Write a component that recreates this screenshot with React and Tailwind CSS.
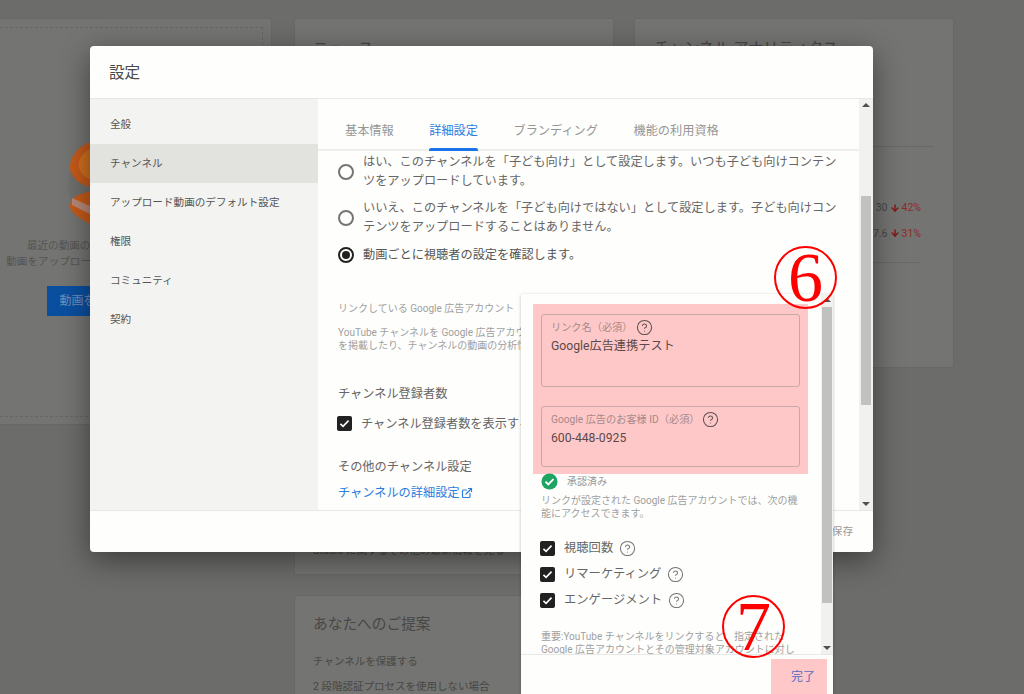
import { ArrowDown, CircleHelp, ExternalLink } from "lucide-react";

const font = "font-['Roboto','Noto_Sans_CJK_JP',sans-serif]";

function Checkbox({ className }) {
  return (
    <span className={`flex h-[15px] w-[15px] shrink-0 items-center justify-center rounded-[2px] bg-[#212121] ${className || ""}`}>
      <svg viewBox="0 0 16 16" className="h-[13px] w-[13px]" fill="none" stroke="#fff" strokeWidth="2">
        <path d="M3 8.5l3.2 3L13 4.5" />
      </svg>
    </span>
  );
}

function Radio({ on }) {
  return (
    <span className={`flex h-4 w-4 shrink-0 items-center justify-center rounded-full border-2 ${on ? "border-[#212121]" : "border-[#757575]"}`}>
      {on && <span className="h-2 w-2 rounded-full bg-[#212121]" />}
    </span>
  );
}

function Scrollbar({ thumbTop, thumbHeight, className }) {
  return (
    <div className={`flex flex-col items-center bg-[#f1f1ef] ${className}`}>
      <div className="mt-[4px] h-0 w-0 border-x-[4px] border-b-[4px] border-x-transparent border-b-[#505050]" />
      <div className={`w-[10px] bg-[#c1c1bf] ${thumbTop} ${thumbHeight}`} />
      <div className="mt-auto mb-[4px] h-0 w-0 border-x-[4px] border-t-[4px] border-x-transparent border-t-[#505050]" />
    </div>
  );
}

function BackgroundPage() {
  return (
    <div className="flex h-full items-start gap-[20px] bg-[#6c6c6a] pt-[18px] text-[#474745]">
      <div className="mr-[2px] h-[407px] w-[272px] rounded-r-[3px] border border-l-0 border-[#686866] bg-[#747472] pr-[8px] pt-[8px]">
        <div className="flex h-[390px] flex-col items-center border border-l-0 border-dashed border-[#666664] pt-[113px]">
          <svg viewBox="0 0 40 84" className="ml-[-86px] h-[84px] w-[40px]">
            <circle cx="36" cy="44" r="36" fill="#6f6f6d" />
            <path d="M24 0C8 6 1 18 2 28c2 10 11 16 22 19z" fill="#c65a1a" />
            <path d="M22 8C14 12 9 20 11 27c2 6 6 9 11 11z" fill="#d0701f" />
            <path d="M24 50C14 52 1 56 2 66c1 6 10 12 22 18z" fill="#c65a1a" />
            <path d="M4 64l20 10v-8L4 57z" fill="#b98a78" />
          </svg>
          <p className="ml-[3px] mt-[13px] whitespace-nowrap text-[10.6px] leading-[16px] text-[#555553]">最近の動画の指標を確認してみたいですか？</p>
          <p className="ml-[3px] whitespace-nowrap text-[10.6px] leading-[16px] text-[#555553]">動画をアップロードして公開すると、確認できます。</p>
          <div className="ml-[1px] mt-[16px] flex h-[30px] w-[170px] items-center bg-[#0a4f9f] pl-[13px] text-[12px] text-[#6d8fbb]">動画をアップロード</div>
        </div>
      </div>

      <div className="flex w-[320px] flex-col gap-[20px]">
        <div className="flex h-[557px] flex-col rounded-[3px] border border-[#686866] bg-[#747472] px-[18px] pt-[18px]">
          <div className="flex items-center justify-between pr-[10px]">
            <span className="text-[15.3px]">ニュース</span>
            <span className="text-[14px]">‹ &nbsp; ›</span>
          </div>
          <p className="mt-auto mb-[15px] text-[10.6px]">Studio に関するその他の最新情報を見る</p>
        </div>
        <div className="h-[200px] rounded-[3px] border border-[#686866] bg-[#747472] px-[18px] pt-[18px]">
          <p className="text-[14.7px] leading-[20px]">あなたへのご提案</p>
          <p className="mt-[20px] text-[10.5px] leading-[16px]">チャンネルを保護する</p>
          <p className="mt-[9px] text-[10.5px] leading-[16px]">2 段階認証プロセスを使用しない場合</p>
        </div>
      </div>

      <div className="h-[350px] w-[320px] rounded-[3px] border border-[#686866] bg-[#747472] px-[19px] pt-[18px]">
        <p className="text-[15.2px]">チャンネル アナリティクス</p>
        <div className="mt-[86px] border-t border-[#686866] pt-[53px] pr-[13px]">
          <div className="flex items-center justify-end gap-[2px] text-[10.5px]">
            30 <ArrowDown size={10} strokeWidth={3.5} className="text-[#7d1a16]" /> <span className="text-[#8f2a26]">42%</span>
          </div>
          <div className="mt-[10px] flex items-center justify-end gap-[2px] text-[10.5px]">
            7.6 <ArrowDown size={10} strokeWidth={3.5} className="text-[#7d1a16]" /> <span className="text-[#8f2a26]">31%</span>
          </div>
          <div className="mt-[21px] border-t border-[#686866]" />
        </div>
      </div>
    </div>
  );
}

function SettingsDialog() {
  const side = ["全般", "チャンネル", "アップロード動画のデフォルト設定", "権限", "コミュニティ", "契約"];
  const tabs = ["基本情報", "詳細設定", "ブランディング", "機能の利用資格"];
  return (
    <div className="absolute left-[90px] top-[46px] flex h-[506px] w-[783px] flex-col overflow-hidden rounded-[4px] bg-[#fefefc] shadow-[0_8px_30px_rgba(0,0,0,0.45)]">
      <div className="flex h-[53px] shrink-0 items-center border-b border-[#e8e8e6] pl-[19px] pt-[3px] text-[15.6px] text-[#4a4a4a]">設定</div>
      <div className="flex min-h-0 flex-1">
        <div className="w-[228px] shrink-0 bg-[#f3f4f1] pt-[6px]">
          {side.map((s, i) => (
            <div key={s} className={`flex h-[39px] items-center pl-[20px] text-[10.6px] text-[#555] ${i === 1 ? "bg-[#e2e2df]" : ""}`}>{s}</div>
          ))}
        </div>
        <div className="flex min-w-0 flex-1 flex-col">
          <div className="flex h-[52px] shrink-0 items-stretch gap-[35.5px] border-b-2 border-[#eeeeec] pl-[27px] text-[12.2px]">
            {tabs.map((t, i) => (
              <div key={t} className={`relative flex items-center pt-[15px] ${i === 1 ? "text-[#2a7de1]" : "text-[#969696]"}`}>
                {t}
                {i === 1 && <span className="absolute inset-x-0 bottom-[-2px] h-[3px] rounded-t-[2px] bg-[#1a73e8]" />}
              </div>
            ))}
          </div>
          <div className="min-h-0 flex-1 overflow-hidden pl-[20px] pr-[20px] text-[12.2px] leading-[18.5px] text-[#666]">
            <div className="mt-[2px] flex items-center gap-[9px]">
              <Radio />
              <p>はい、このチャンネルを「子ども向け」として設定します。いつも子ども向けコンテンツをアップロードしています。</p>
            </div>
            <div className="mt-[9px] flex items-center gap-[9px]">
              <Radio />
              <p>いいえ、このチャンネルを「子ども向けではない」として設定します。子ども向けコンテンツをアップロードすることはありません。</p>
            </div>
            <div className="mt-[10px] flex items-center gap-[9px]">
              <Radio on />
              <p className="text-[#555]">動画ごとに視聴者の設定を確認します。</p>
            </div>
            <p className="mt-[35px] text-[10px] leading-[18px] whitespace-nowrap text-[#a0a0a0]">リンクしている Google 広告アカウント</p>
            <p className="mt-[8px] whitespace-nowrap text-[10px] leading-[13px] text-[#a0a0a0]">
              YouTube チャンネルを Google 広告アカウントにリンクすると、動画に広告
              <br />
              を掲載したり、チャンネルの動画の分析情報を確認したりできます。
            </p>
            <p className="mt-[33px] text-[12.2px] leading-[18px]">チャンネル登録者数</p>
            <div className="-ml-[1px] mt-[12px] flex items-center gap-[9px]">
              <Checkbox />
              <span className="whitespace-nowrap">チャンネル登録者数を表示する</span>
            </div>
            <p className="mt-[25px] leading-[18px]">その他のチャンネル設定</p>
            <div className="mt-[8px] flex items-center gap-[1px] text-[#2a7de1]">
              チャンネルの詳細設定<ExternalLink size={12} strokeWidth={2.4} />
            </div>
          </div>
        </div>
        <Scrollbar className="w-[14px] shrink-0" thumbTop="mt-[89px]" thumbHeight="h-[209px]" />
      </div>
      <div className="flex h-[42px] shrink-0 items-center justify-end border-t border-[#e8e8e6] pr-[20px] text-[10.6px] text-[#9a9a9a]">保存</div>
    </div>
  );
}

function LinkDialog() {
  const perms = ["視聴回数", "リマーケティング", "エンゲージメント"];
  return (
    <div className="absolute left-[521px] top-[294px] flex h-[400px] w-[312px] flex-col bg-[#fefefc] shadow-[0_1px_3px_rgba(0,0,0,0.25)]">
      <div className="flex h-[361px] min-h-0">
        <div className="min-w-0 flex-1 overflow-hidden">
          <div className="ml-[12px] mt-[10px] w-[275px] bg-[#ffc8c8] px-[8px] pb-[7px] pt-[10px]">
            <div className="h-[73px] rounded-[3px] border border-[#c8a8a8] px-[9px] pt-[4px]">
              <div className="flex items-center gap-[3px] text-[10.2px] leading-[16px] text-[#a58888]">
                リンク名（必須）<CircleHelp size={17} strokeWidth={1.5} className="text-[#5f5050]" />
              </div>
              <p className="mt-[1px] text-[12.2px] leading-[18px] text-[#5a4a4a]">Google広告連携テスト</p>
            </div>
            <div className="mt-[19px] h-[61px] rounded-[3px] border border-[#c8a8a8] px-[9px] pt-[4px]">
              <div className="flex items-center gap-[2px] text-[10.2px] leading-[16px] text-[#a58888]">
                Google 広告のお客様 ID（必須）<CircleHelp size={17} strokeWidth={1.5} className="text-[#5f5050]" />
              </div>
              <p className="mt-[1px] text-[12.2px] leading-[18px] text-[#5a4a4a]">600-448-0925</p>
            </div>
          </div>
          <div className="ml-[20px] mt-[-1px] flex items-center gap-[9px] text-[10px] text-[#969696]">
            <svg viewBox="0 0 18 18" className="h-[17px] w-[17px]">
              <circle cx="9" cy="9" r="8.5" fill="#1fa463" />
              <path d="M4.8 9.2l2.9 2.8 5.5-5.6" fill="none" stroke="#fff" strokeWidth="2" />
            </svg>
            承認済み
          </div>
          <p className="ml-[20px] mt-[4px] whitespace-nowrap text-[10px] leading-[13px] text-[#a0a0a0]">
            リンクが設定された Google 広告アカウントでは、次の機
            <br />
            能にアクセスできます。
          </p>
          <div className="ml-[19px] mt-[21px] flex flex-col gap-[11px] text-[12.3px] leading-[15px] text-[#666]">
            {perms.map((p) => (
              <div key={p} className="flex h-[15px] items-center gap-[9px]">
                <Checkbox />
                <span>{p}</span>
                <CircleHelp size={17} strokeWidth={1.5} className="-ml-[3px] text-[#757575]" />
              </div>
            ))}
          </div>
          <p className="ml-[20px] mt-[22px] whitespace-nowrap text-[10px] leading-[13px] text-[#a0a0a0]">
            重要:YouTube チャンネルをリンクすると、指定された
            <br />
            Google 広告アカウントとその管理対象アカウントに対し
          </p>
        </div>
        <Scrollbar className="w-[12px] shrink-0" thumbTop="mt-[5px]" thumbHeight="h-[296px]" />
      </div>
      <div className="flex flex-1 items-start justify-end border-t border-[#e8e8e6] pr-[6px] pt-[4px]">
        <div className="flex h-[35px] w-[56px] items-center justify-center bg-[#ffc8c8] pl-[8px] text-[12px] text-[#5468c4]">完了</div>
      </div>
    </div>
  );
}

export default function App() {
  return (
    <div className={`relative h-[694px] w-[1024px] overflow-hidden ${font}`}>
      <BackgroundPage />
      <SettingsDialog />
      <LinkDialog />
      <span className="absolute left-[774px] top-[246px] flex h-[63px] w-[63px] items-center justify-center rounded-full border-2 border-[#ff0000] font-['Liberation_Serif',serif] text-[70px] leading-none text-[#ff0000]">6</span>
      <span className="absolute left-[722px] top-[595px] flex h-[63px] w-[63px] items-center justify-center rounded-full border-2 border-[#ff0000] font-['Liberation_Serif',serif] text-[70px] leading-none text-[#ff0000]">7</span>
    </div>
  );
}
